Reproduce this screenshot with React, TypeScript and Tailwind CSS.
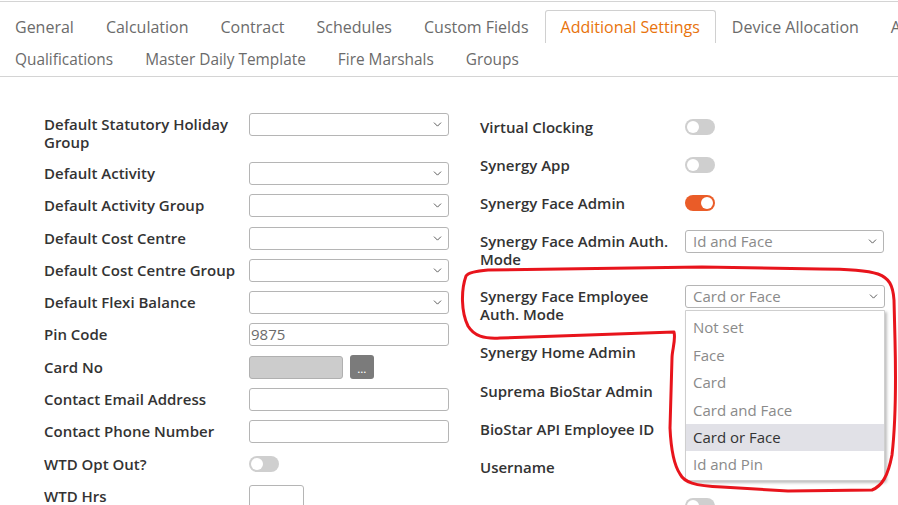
import { ChevronDown } from 'lucide-react'

const font = { fontFamily: '"Open Sans", "Noto Sans", Arial, sans-serif' }

const tabsTop = ['General', 'Calculation', 'Contract', 'Schedules', 'Custom Fields', 'Additional Settings', 'Device Allocation', 'Access']
const tabsBottom = ['Qualifications', 'Master Daily Template', 'Fire Marshals', 'Groups']

const authModes = ['Not set', 'Face', 'Card', 'Card and Face', 'Card or Face', 'Id and Pin']

function Tab({ label, active, small }: { label: string; active?: boolean; small?: boolean }) {
  return (
    <div
      className={`h-[33px] px-[15px] flex items-center whitespace-nowrap ${small ? 'text-[15.4px]' : 'text-[16px]'} ${
        active ? 'border border-b-0 border-[#d0d0d0] rounded-t-[3px] text-[#e8730c] bg-white' : 'border border-transparent text-[#6b6b6b]'
      }`}
    >
      {label}
    </div>
  )
}

function Select({ value }: { value?: string }) {
  return (
    <div className="w-[200px] h-[23px] border border-[#b5b5b5] rounded-[3px] bg-white flex items-center justify-between pl-[7px] pr-[4px]">
      <span className="text-[15px] text-[#8a8a8a] leading-none">{value}</span>
      <ChevronDown size={13} strokeWidth={1.75} className="text-[#555]" />
    </div>
  )
}

function TextInput({ value, width = 'w-[200px]' }: { value?: string; width?: string }) {
  return (
    <div className={`${width} h-[23px] border border-[#b5b5b5] rounded-[3px] bg-white flex items-center pl-[1px]`}>
      <span className="text-[15px] text-[#6b6b6b] leading-none">{value}</span>
    </div>
  )
}

function Toggle({ on }: { on?: boolean }) {
  return (
    <div className={`w-[30px] h-[16px] rounded-full flex items-center px-[2px] ${on ? 'bg-[#ea5c28] justify-end' : 'bg-[#cfcfcf] justify-start'}`}>
      <div className="w-[12px] h-[12px] rounded-full bg-white" />
    </div>
  )
}

function Label({ children }: { children?: React.ReactNode }) {
  return <div className="w-[205px] pr-3 text-[15px] leading-[18px] font-semibold text-[#333]">{children}</div>
}

function LeftRow({ label, children, tall }: { label: React.ReactNode; children: React.ReactNode; tall?: boolean }) {
  return (
    <div className={`flex items-start ${tall ? 'h-[49px]' : 'h-[32.3px]'}`}>
      <div className="pt-[2px]">
        <Label>{label}</Label>
      </div>
      <div className="h-[23px] flex items-center">{children}</div>
    </div>
  )
}

export default function App() {
  return (
    <div className="relative w-[898px] h-[505px] overflow-hidden bg-white" style={font}>
      {/* tab strip */}
      <div className="border-t border-[#d4d4d4] mt-[1px]">
        <div className="flex pt-[8px] -ml-[1px]">
          {tabsTop.map((t) => (
            <Tab key={t} label={t} active={t === 'Additional Settings'} />
          ))}
        </div>
        <div className="flex -ml-[1px] h-[34px] border-b border-[#d4d4d4]">
          {tabsBottom.map((t) => (
            <Tab key={t} label={t} small />
          ))}
        </div>
      </div>

      <div className="flex gap-[32px] pl-[44px]">
        {/* left column */}
        <div className="pt-[36px] w-[404px]">
          <LeftRow label="Default Statutory Holiday Group" tall>
            <Select />
          </LeftRow>
          <LeftRow label="Default Activity">
            <Select />
          </LeftRow>
          <LeftRow label="Default Activity Group">
            <Select />
          </LeftRow>
          <LeftRow label="Default Cost Centre">
            <Select />
          </LeftRow>
          <LeftRow label="Default Cost Centre Group">
            <Select />
          </LeftRow>
          <LeftRow label="Default Flexi Balance">
            <Select />
          </LeftRow>
          <LeftRow label="Pin Code">
            <TextInput value="9875" />
          </LeftRow>
          <LeftRow label="Card No">
            <div className="flex items-center gap-[7px]">
              <div className="w-[94px] h-[23px] rounded-[3px] bg-[#cccccc] border border-[#b0b0b0]" />
              <div className="w-[24px] h-[24px] rounded-[3px] bg-[#7b7b7b] flex items-end justify-center pb-[5px]">
                <span className="text-white text-[9px] leading-none font-bold tracking-[0.5px]">...</span>
              </div>
            </div>
          </LeftRow>
          <LeftRow label="Contact Email Address">
            <TextInput />
          </LeftRow>
          <LeftRow label="Contact Phone Number">
            <TextInput />
          </LeftRow>
          <LeftRow label="WTD Opt Out?">
            <Toggle />
          </LeftRow>
          <LeftRow label="WTD Hrs">
            <TextInput width="w-[55px]" />
          </LeftRow>
        </div>

        {/* right column */}
        <div className="pt-[31px] w-[404px]">
          <div className="flex items-center h-[38px]">
            <Label>Virtual Clocking</Label>
            <Toggle />
          </div>
          <div className="flex items-center h-[38px]">
            <Label>Synergy App</Label>
            <Toggle />
          </div>
          <div className="flex items-center h-[37px]">
            <Label>Synergy Face Admin</Label>
            <Toggle on />
          </div>
          <div className="flex items-start h-[55px] pt-[9px]">
            <div className="pt-[2px]">
              <Label>Synergy Face Admin Auth. Mode</Label>
            </div>
            <Select value="Id and Face" />
          </div>
          <div className="flex items-start h-[57px] pt-[9px]">
            <div className="pt-[2px]">
              <Label>Synergy Face Employee Auth. Mode</Label>
            </div>
            <div className="relative">
              <Select value="Card or Face" />
              {/* open option list */}
              <div className="absolute z-10 left-0 top-[25px] w-[200px] h-[171px] bg-white border border-[#cfcfcf] rounded-b-[3px] shadow-[2px_2px_3px_rgba(0,0,0,0.25)] py-[3px]">
                {authModes.map((m) => (
                  <div
                    key={m}
                    className={`h-[27.4px] flex items-center pl-[7px] text-[15px] ${
                      m === 'Card or Face' ? 'bg-[#e1e1e7] text-[#333]' : 'text-[#8a8a8a]'
                    }`}
                  >
                    {m}
                  </div>
                ))}
              </div>
            </div>
          </div>
          <div className="flex items-center h-[38px]">
            <Label>Synergy Home Admin</Label>
            <Toggle />
          </div>
          <div className="flex items-center h-[39px]">
            <Label>Suprema BioStar Admin</Label>
            <Toggle />
          </div>
          <div className="flex items-center h-[38px]">
            <Label>BioStar API Employee ID</Label>
            <TextInput />
          </div>
          <div className="flex items-center h-[38px]">
            <Label>Username</Label>
            <TextInput />
          </div>
          <div className="flex items-center h-[40px]">
            <Label />
            <Toggle />
          </div>
        </div>
      </div>

      {/* hand-drawn highlight loop */}
      <svg className="absolute inset-0 pointer-events-none z-20" width="898" height="505" viewBox="0 0 898 505">
        <path
          d="M466 276 C 461 290, 461 312, 468 326 C 474 336, 484 339, 500 338 L 588 335 L 674 332 C 676 340, 672 350, 672 358 L 670 428 C 671 450, 674 465, 680 474 C 684 482, 694 486, 722 487 L 788 491 L 872 490 C 882 486, 888 476, 892 455 C 896 420, 896 380, 895 340 L 894 300 C 893 285, 889 278, 878 274 C 866 270, 850 269, 820 269 L 702 267 L 488 270 C 476 271, 468 273, 466 276 Z"
          fill="none"
          stroke="#e8141c"
          strokeWidth="3"
          strokeLinejoin="round"
        />
      </svg>
    </div>
  )
}
